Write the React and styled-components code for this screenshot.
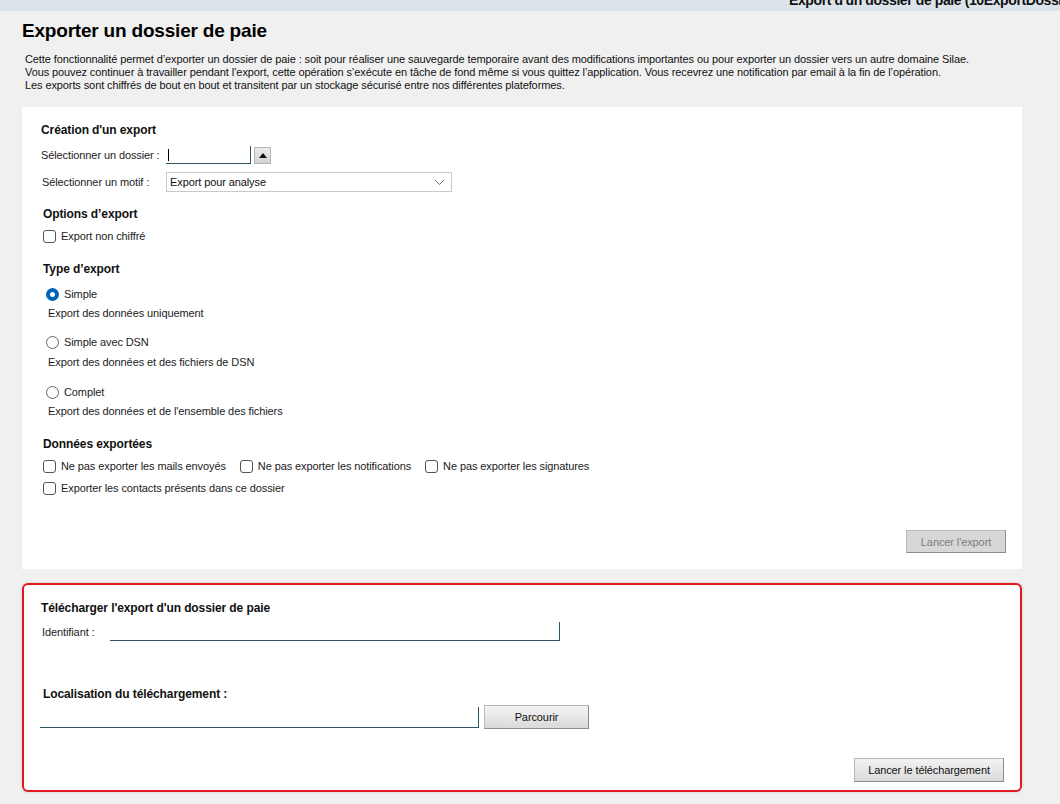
import React from "react";
import styled, { createGlobalStyle } from "styled-components";

const GlobalStyle = createGlobalStyle`
  html, body {
    margin: 0;
    padding: 0;
    background: #f0f0f0;
  }
  body {
    font-family: "Liberation Sans", Arial, sans-serif;
    color: #1b1b1b;
    font-size: 11px;
    letter-spacing: -0.1px;
  }
`;

const Page = styled.div`
  width: 1060px;
  height: 804px;
  overflow: hidden;
  background: #f0f0f0;
`;

const TopStrip = styled.div`
  height: 11px;
  background: #dce4ea;
  overflow: hidden;
  white-space: nowrap;
  padding-left: 789px;
  font-weight: bold;
  font-size: 14px;
  letter-spacing: -0.4px;
  line-height: 11px;
  color: #111;
  & > span {
    display: inline-block;
    transform: translateY(-5px);
  }
`;

const Content = styled.div`
  padding: 0 38px 0 22px;
`;

const Title = styled.h1`
  margin: 9px 0 0 0;
  font-size: 19px;
  letter-spacing: -0.2px;
  font-weight: bold;
  line-height: 22px;
  color: #000;
`;

const Intro = styled.p`
  margin: 11px 0 0 3px;
  line-height: 13px;
  color: #111;
`;

const Panel = styled.section`
  background: #fff;
  margin-top: ${(p) => p.mt || 0}px;
  padding: 0 16px ${(p) => p.pb || 16}px 19px;
  display: flex;
  flex-direction: column;
  box-sizing: border-box;
  height: ${(p) => p.h}px;
`;

const FramedPanel = styled(Panel)`
  border: 2px solid #e3191f;
  border-radius: 6px;
  padding-left: 17px;
  box-shadow: 0 0 3px rgba(0, 0, 0, 0.15);
`;

const Line = styled.div`
  display: flex;
  align-items: center;
  height: ${(p) => p.h || 16}px;
  margin-top: ${(p) => p.mt || 0}px;
  padding-left: ${(p) => p.indent || 0}px;
  justify-content: ${(p) => (p.end ? "flex-end" : "flex-start")};
`;

const SectionTitle = styled.div`
  font-weight: bold;
  font-size: 12px;
  letter-spacing: -0.1px;
  color: #111;
`;

const Label = styled.span`
  width: ${(p) => (p.w ? `${p.w}px` : "auto")};
  flex: none;
  white-space: nowrap;
`;

const TextField = styled.div`
  box-sizing: border-box;
  width: ${(p) => p.w}px;
  height: ${(p) => p.h || 18}px;
  background: #fff;
  border-bottom: 1px solid #2f5464;
  border-right: 1px solid #2f5464;
  margin-left: ${(p) => p.ml || 0}px;
  position: relative;
`;

const Caret = styled.span`
  position: absolute;
  left: 2px;
  top: 3px;
  width: 1px;
  height: 12px;
  background: #000;
`;

const SpinButton = styled.div`
  width: 15px;
  height: 15px;
  margin-left: 3px;
  background: linear-gradient(#ececec, #d4d4d4);
  border: 1px solid #b4b4b4;
  display: flex;
  align-items: center;
  justify-content: center;
  &::after {
    content: "";
    border-left: 4px solid transparent;
    border-right: 4px solid transparent;
    border-bottom: 5px solid #111;
  }
`;

const Select = styled.div`
  box-sizing: border-box;
  width: 286px;
  height: 20px;
  border: 1px solid #cacaca;
  background: #fff;
  display: flex;
  align-items: center;
  justify-content: space-between;
  padding: 0 6px 0 3px;
  color: #111;
`;

const Box = styled.span`
  box-sizing: border-box;
  width: 13px;
  height: 13px;
  flex: none;
  border: 1px solid #555;
  border-radius: 3px;
  background: #fff;
  margin-right: 5px;
`;

const Radio = styled.span`
  box-sizing: border-box;
  width: 13px;
  height: 13px;
  flex: none;
  border-radius: 50%;
  background: #fff;
  border: ${(p) => (p.on ? "4px solid #0064b8" : "1px solid #666")};
  margin-right: 5px;
`;

const Choice = styled.label`
  display: flex;
  align-items: center;
  margin-right: ${(p) => p.mr || 0}px;
  white-space: nowrap;
`;

const Button = styled.button`
  font-family: inherit;
  font-size: 11px;
  letter-spacing: -0.1px;
  height: ${(p) => p.h || 23}px;
  width: ${(p) => p.w}px;
  box-sizing: border-box;
  border: 1px solid #b9b9b9;
  border-right-color: #8c8c8c;
  border-bottom-color: #8c8c8c;
  background: ${(p) =>
    p.disabled ? "#d7d7d7" : "linear-gradient(#f3f3f3, #dadada)"};
  color: ${(p) => (p.disabled ? "#7d7d7d" : "#111")};
  padding: 0;
  margin-left: ${(p) => p.ml || 0}px;
`;

const Spacer = styled.div`
  flex: 1;
`;

function Chevron() {
  return (
    <svg width="11" height="7" viewBox="0 0 11 7">
      <path d="M1 1 L5.5 5.5 L10 1" fill="none" stroke="#777" strokeWidth="1" />
    </svg>
  );
}

export default function App() {
  return (
    <Page>
      <GlobalStyle />
      <TopStrip>
        <span>Export d'un dossier de paie (10ExportDossier)</span>
      </TopStrip>
      <Content>
        <Title>Exporter un dossier de paie</Title>
        <Intro>
          Cette fonctionnalité permet d’exporter un dossier de paie : soit pour réaliser une sauvegarde temporaire avant des modifications importantes ou pour exporter un dossier vers un autre domaine Silae.
          <br />
          Vous pouvez continuer à travailler pendant l’export, cette opération s’exécute en tâche de fond même si vous quittez l’application. Vous recevrez une notification par email à la fin de l’opération.
          <br />
          Les exports sont chiffrés de bout en bout et transitent par un stockage sécurisé entre nos différentes plateformes.
        </Intro>

        <Panel mt={15} h={462}>
          <Line mt={15}>
            <SectionTitle>Création d'un export</SectionTitle>
          </Line>
          <Line mt={7} h={20}>
            <Label w={125}>Sélectionner un dossier :</Label>
            <TextField w={85}>
              <Caret />
            </TextField>
            <SpinButton />
          </Line>
          <Line mt={7} h={20} indent={1}>
            <Label w={124}>Sélectionner un motif :</Label>
            <Select>
              <span>Export pour analyse</span>
              <Chevron />
            </Select>
          </Line>
          <Line mt={14} indent={2}>
            <SectionTitle>Options d’export</SectionTitle>
          </Line>
          <Line mt={6} indent={2}>
            <Choice>
              <Box />
              Export non chiffré
            </Choice>
          </Line>
          <Line mt={17} indent={2}>
            <SectionTitle>Type d’export</SectionTitle>
          </Line>
          <Line mt={9} indent={5}>
            <Choice>
              <Radio on />
              Simple
            </Choice>
          </Line>
          <Line mt={3} indent={7}>
            Export des données uniquement
          </Line>
          <Line mt={13} indent={5}>
            <Choice>
              <Radio />
              Simple avec DSN
            </Choice>
          </Line>
          <Line mt={4} indent={7}>
            Export des données et des fichiers de DSN
          </Line>
          <Line mt={14} indent={5}>
            <Choice>
              <Radio />
              Complet
            </Choice>
          </Line>
          <Line mt={3} indent={7}>
            Export des données et de l'ensemble des fichiers
          </Line>
          <Line mt={17} indent={2}>
            <SectionTitle>Données exportées</SectionTitle>
          </Line>
          <Line mt={6} indent={2}>
            <Choice mr={14}>
              <Box />
              Ne pas exporter les mails envoyés
            </Choice>
            <Choice mr={14}>
              <Box />
              Ne pas exporter les notifications
            </Choice>
            <Choice>
              <Box />
              Ne pas exporter les signatures
            </Choice>
          </Line>
          <Line mt={6} indent={2}>
            <Choice>
              <Box />
              Exporter les contacts présents dans ce dossier
            </Choice>
          </Line>
          <Spacer />
          <Line h={23} end>
            <Button w={100} disabled>
              Lancer l'export
            </Button>
          </Line>
        </Panel>

        <FramedPanel mt={14} h={209} pb={8}>
          <Line mt={15}>
            <SectionTitle>Télécharger l'export d'un dossier de paie</SectionTitle>
          </Line>
          <Line mt={6} h={19} indent={1}>
            <Label w={68}>Identifiant :</Label>
            <TextField w={450} h={19} />
          </Line>
          <Line mt={45} indent={2}>
            <SectionTitle>Localisation du téléchargement :</SectionTitle>
          </Line>
          <Line mt={3} h={24}>
            <TextField w={439} h={21} ml={-1} />
            <Button w={105} h={24} ml={5}>
              Parcourir
            </Button>
          </Line>
          <Spacer />
          <Line h={24} end>
            <Button w={150} h={24}>
              Lancer le téléchargement
            </Button>
          </Line>
        </FramedPanel>
      </Content>
    </Page>
  );
}
